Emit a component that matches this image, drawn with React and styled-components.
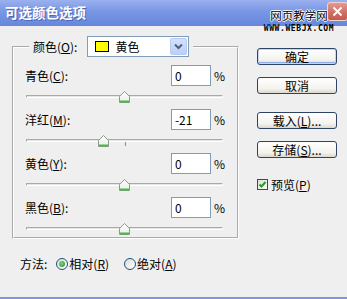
import React from "react";
import styled, { createGlobalStyle } from "styled-components";

const GlobalStyle = createGlobalStyle`
  html, body {
    margin: 0;
    padding: 0;
    background: #efefef;
  }
  body {
    font-family: "Noto Sans CJK SC", "DejaVu Sans", sans-serif;
    font-size: 12px;
    color: #000;
  }
`;

const Window = styled.div`
  position: relative;
  width: 347px;
  height: 299px;
  box-sizing: border-box;
  overflow: hidden;
  display: flex;
  flex-direction: column;
  background: #efefef;
  border-bottom: 2px solid #8194dc;
`;

const TitleBar = styled.div`
  flex: none;
  height: 26px;
  display: flex;
  align-items: center;
  padding-left: 5px;
  background: linear-gradient(180deg, #9ab0ef 0%, #7896e4 45%, #6686dc 100%);
  color: #fff;
  font-size: 13.5px;
  font-weight: bold;
  line-height: 1;
  text-shadow: 1px 1px 0 #4b66b4;
`;

const Watermark = styled.div`
  position: absolute;
  top: 8px;
  left: 263px;
  width: 72px;
  display: flex;
  flex-direction: column;
  align-items: center;
  pointer-events: none;
`;

const WatermarkTitle = styled.span`
  font-size: 11.5px;
  line-height: 15px;
  color: #000;
  text-shadow: 1px 0 0 #fff, -1px 0 0 #fff, 0 1px 0 #fff, 0 -1px 0 #fff;
`;

const WatermarkUrl = styled.span`
  margin-top: 2px;
  font-family: "DejaVu Sans Mono", monospace;
  font-size: 8px;
  font-weight: bold;
  line-height: 7px;
  letter-spacing: 0.6px;
  color: #000;
`;

const CloseButton = styled.div`
  position: absolute;
  top: 2px;
  left: 327px;
  width: 21px;
  height: 19px;
  box-sizing: border-box;
  border: 1px solid #f2d0cc;
  border-radius: 3px;
  background: linear-gradient(180deg, #e39a90 0%, #cf6c60 60%, #c45a4e 100%);
  display: flex;
  align-items: center;
  justify-content: center;
`;

const Main = styled.div`
  display: flex;
  align-items: flex-start;
  padding: 10px 0 0 12px;
`;

const Group = styled.fieldset`
  margin: 0;
  width: 227px;
  box-sizing: border-box;
  padding: 0 12px 1px 11px;
  border: 2px groove #fff;
`;

const Legend = styled.legend`
  margin-left: 4px;
  padding: 0 4px;
  display: flex;
  align-items: center;
  gap: 10px;
`;

const Label = styled.span`
  line-height: 15px;
  white-space: nowrap;
  flex: ${(p) => (p.grow ? 1 : "none")};
`;

const Select = styled.div`
  width: 102px;
  height: 21px;
  box-sizing: border-box;
  border: 1px solid #7f9db9;
  background: #fff;
  display: flex;
  align-items: center;
  padding-left: 7px;
`;

const Swatch = styled.span`
  width: 14px;
  height: 11px;
  box-sizing: border-box;
  border: 1px solid #000;
  background: ${(p) => p.color};
  margin-right: 6px;
`;

const SelectText = styled.span`
  flex: 1;
  line-height: 15px;
`;

const SelectArrow = styled.span`
  width: 17px;
  height: 17px;
  margin-right: 1px;
  box-sizing: border-box;
  border: 1px solid #b8cbf3;
  border-radius: 2px;
  background: linear-gradient(180deg, #d5e1fb 0%, #bccff7 100%);
  display: flex;
  align-items: center;
  justify-content: center;
`;

const Channel = styled.div`
  margin-top: ${(p) => (p.first ? 8 : 5)}px;
`;

const Row = styled.div`
  height: 21px;
  display: flex;
  align-items: center;
`;

const Field = styled.div`
  width: 40px;
  height: 21px;
  box-sizing: border-box;
  border: 1px solid #7f9db9;
  background: #fff;
  padding-left: 3px;
  display: flex;
  align-items: center;
  line-height: 15px;
`;

const Percent = styled.span`
  margin-left: 3px;
  line-height: 15px;
`;

const Slider = styled.div`
  position: relative;
  height: 18px;
`;

const Track = styled.div`
  position: absolute;
  left: 1px;
  right: 2px;
  top: 9px;
  height: 3px;
  box-sizing: border-box;
  border-top: 1px solid #a9a9a9;
  border-left: 1px solid #a9a9a9;
  border-bottom: 1px solid #fff;
  border-right: 1px solid #fff;
  background: #e4e4e4;
`;

const Tick = styled.div`
  position: absolute;
  top: 12px;
  width: 1px;
  height: 4px;
  background: #8d8d8d;
`;

const Thumb = styled.svg`
  position: absolute;
  top: 5px;
`;

const Side = styled.div`
  margin-left: 18px;
  padding-top: 12px;
  display: flex;
  flex-direction: column;
`;

const Button = styled.div`
  width: 80px;
  height: 17px;
  box-sizing: border-box;
  margin-top: ${(p) => p.gap || 0}px;
  border: 1px solid #2e4466;
  border-radius: 3px;
  background: linear-gradient(180deg, #ffffff 0%, #f4f3ee 70%, #dcd8cf 100%);
  box-shadow: ${(p) =>
    p.primary ? "inset 0 0 0 1px #c4d6f6, inset 0 -1px 0 1px #8eaee9" : "none"};
  display: flex;
  align-items: center;
  justify-content: center;
  line-height: 15px;
`;

const Check = styled.label`
  margin-top: 19px;
  display: flex;
  align-items: center;
  gap: 3px;
  line-height: 15px;
`;

const Box = styled.span`
  width: 11px;
  height: 11px;
  box-sizing: border-box;
  border: 1px solid #1c5180;
  background: linear-gradient(135deg, #dcdcd6 0%, #fff 100%);
  display: flex;
  align-items: center;
  justify-content: center;
`;

const Method = styled.div`
  margin-top: 17px;
  padding-left: 20px;
  display: flex;
  align-items: center;
  line-height: 15px;
`;

const MethodLabel = styled.span`
  margin-right: 9px;
`;

const Radio = styled.span`
  width: 12px;
  height: 12px;
  box-sizing: border-box;
  border: 1px solid #1c5180;
  border-radius: 50%;
  background: linear-gradient(135deg, #dcdcd6 0%, #fff 100%);
  display: flex;
  align-items: center;
  justify-content: center;
  margin-right: 1px;

  &::after {
    content: "";
    display: ${(p) => (p.checked ? "block" : "none")};
    width: 6px;
    height: 6px;
    border-radius: 50%;
    background: radial-gradient(circle at 40% 40%, #7fd37f 0%, #2f9e2f 80%);
  }
`;

const RadioText = styled.span`
  margin-right: ${(p) => p.gap || 0}px;
`;

const channels = [
  { name: "青色", key: "C", value: 0 },
  { name: "洋红", key: "M", value: -21, tick: true },
  { name: "黄色", key: "Y", value: 0 },
  { name: "黑色", key: "B", value: 0 },
];

function ThumbIcon({ value }) {
  const left = 99 + (value / 100) * 98.5 - 5.5;
  return (
    <Thumb width="11" height="12" viewBox="0 0 11 12" style={{ left }}>
      <defs>
        <linearGradient id={"tg" + value} x1="0" y1="0" x2="0" y2="1">
          <stop offset="0" stopColor="#ffffff" />
          <stop offset="1" stopColor="#e6efe6" />
        </linearGradient>
      </defs>
      <path
        d="M0.5 5.5 L5.5 0.5 L10.5 5.5 V11.5 H0.5 Z"
        fill={"url(#tg" + value + ")"}
        stroke="#8c9a8c"
      />
      <path d="M1 10.5 H10" stroke="#4cb84c" strokeWidth="2" />
    </Thumb>
  );
}

export default function App() {
  return (
    <>
      <GlobalStyle />
      <Window>
        <TitleBar>可选颜色选项</TitleBar>
        <CloseButton>
          <svg width="11" height="11" viewBox="0 0 11 11">
            <path d="M1.5 1.5 L9.5 9.5 M9.5 1.5 L1.5 9.5" stroke="#fff" strokeWidth="2" />
          </svg>
        </CloseButton>
        <Watermark>
          <WatermarkTitle>网页教学网</WatermarkTitle>
          <WatermarkUrl>WWW.WEBJX.COM</WatermarkUrl>
        </Watermark>
        <Main>
          <Group>
            <Legend>
              <Label>
                颜色(<u>O</u>):
              </Label>
              <Select>
                <Swatch color="#ffff00" />
                <SelectText>黄色</SelectText>
                <SelectArrow>
                  <svg width="9" height="7" viewBox="0 0 9 7">
                    <path d="M1 1.5 L4.5 5 L8 1.5" fill="none" stroke="#4d6185" strokeWidth="2" />
                  </svg>
                </SelectArrow>
              </Select>
            </Legend>
            {channels.map((c, i) => (
              <Channel key={c.key} first={i === 0}>
                <Row>
                  <Label grow>
                    {c.name}(<u>{c.key}</u>):
                  </Label>
                  <Field>{c.value}</Field>
                  <Percent>%</Percent>
                </Row>
                <Slider>
                  <Track />
                  {c.tick && <Tick style={{ left: 100 }} />}
                  <ThumbIcon value={c.value} />
                </Slider>
              </Channel>
            ))}
          </Group>
          <Side>
            <Button primary>确定</Button>
            <Button gap={12}>取消</Button>
            <Button gap={18}>
              载入(<u>L</u>)...
            </Button>
            <Button gap={12}>
              存储(<u>S</u>)...
            </Button>
            <Check>
              <Box>
                <svg width="9" height="9" viewBox="0 0 9 9">
                  <path d="M1.5 4.5 L3.5 6.5 L7.5 2" fill="none" stroke="#21a121" strokeWidth="2" />
                </svg>
              </Box>
              <Label>
                预览(<u>P</u>)
              </Label>
            </Check>
          </Side>
        </Main>
        <Method>
          <MethodLabel>方法:</MethodLabel>
          <Radio checked />
          <RadioText gap={15}>
            相对(<u>R</u>)
          </RadioText>
          <Radio />
          <RadioText>
            绝对(<u>A</u>)
          </RadioText>
        </Method>
      </Window>
    </>
  );
}
